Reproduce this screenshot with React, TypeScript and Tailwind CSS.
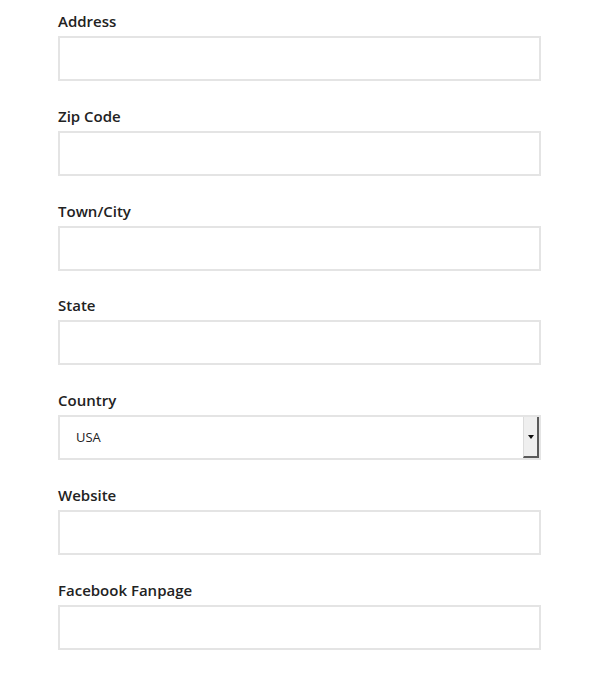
import React from "react";

const labels = ["Address", "Zip Code", "Town/City", "State", "Country", "Website", "Facebook Fanpage"];

export default function App() {
  return (
    <div
      className="w-[602px] h-[676px] bg-white pt-[11px] pl-[58px]"
      style={{ fontFamily: '"Open Sans", "Liberation Sans", sans-serif' }}
    >
      <div className="w-[483px]">
        {labels.map((l) => (
          <div key={l} className="mb-[24.8px]">
            <div className="text-[15px] leading-[20px] font-semibold text-[#222] mb-[5px]">{l}</div>
            {l === "Country" ? (
              <div className="relative h-[45px] border-2 border-[#e4e4e4] flex items-center pl-[16px]">
                <span className="text-[13px] text-[#222]">USA</span>
                <div className="absolute right-0 top-0 bottom-0 w-[16px] bg-[#efefef] border-l border-[#dcdcdc] border-r-2 border-b-2 border-r-[#5a5a5a] border-b-[#5a5a5a] flex items-center justify-center">
                  <svg width="6" height="4" viewBox="0 0 6 4">
                    <path d="M0 0 H6 L3 4 Z" fill="#111" />
                  </svg>
                </div>
              </div>
            ) : (
              <div className="h-[45px] border-2 border-[#e4e4e4]" />
            )}
          </div>
        ))}
      </div>
    </div>
  );
}
